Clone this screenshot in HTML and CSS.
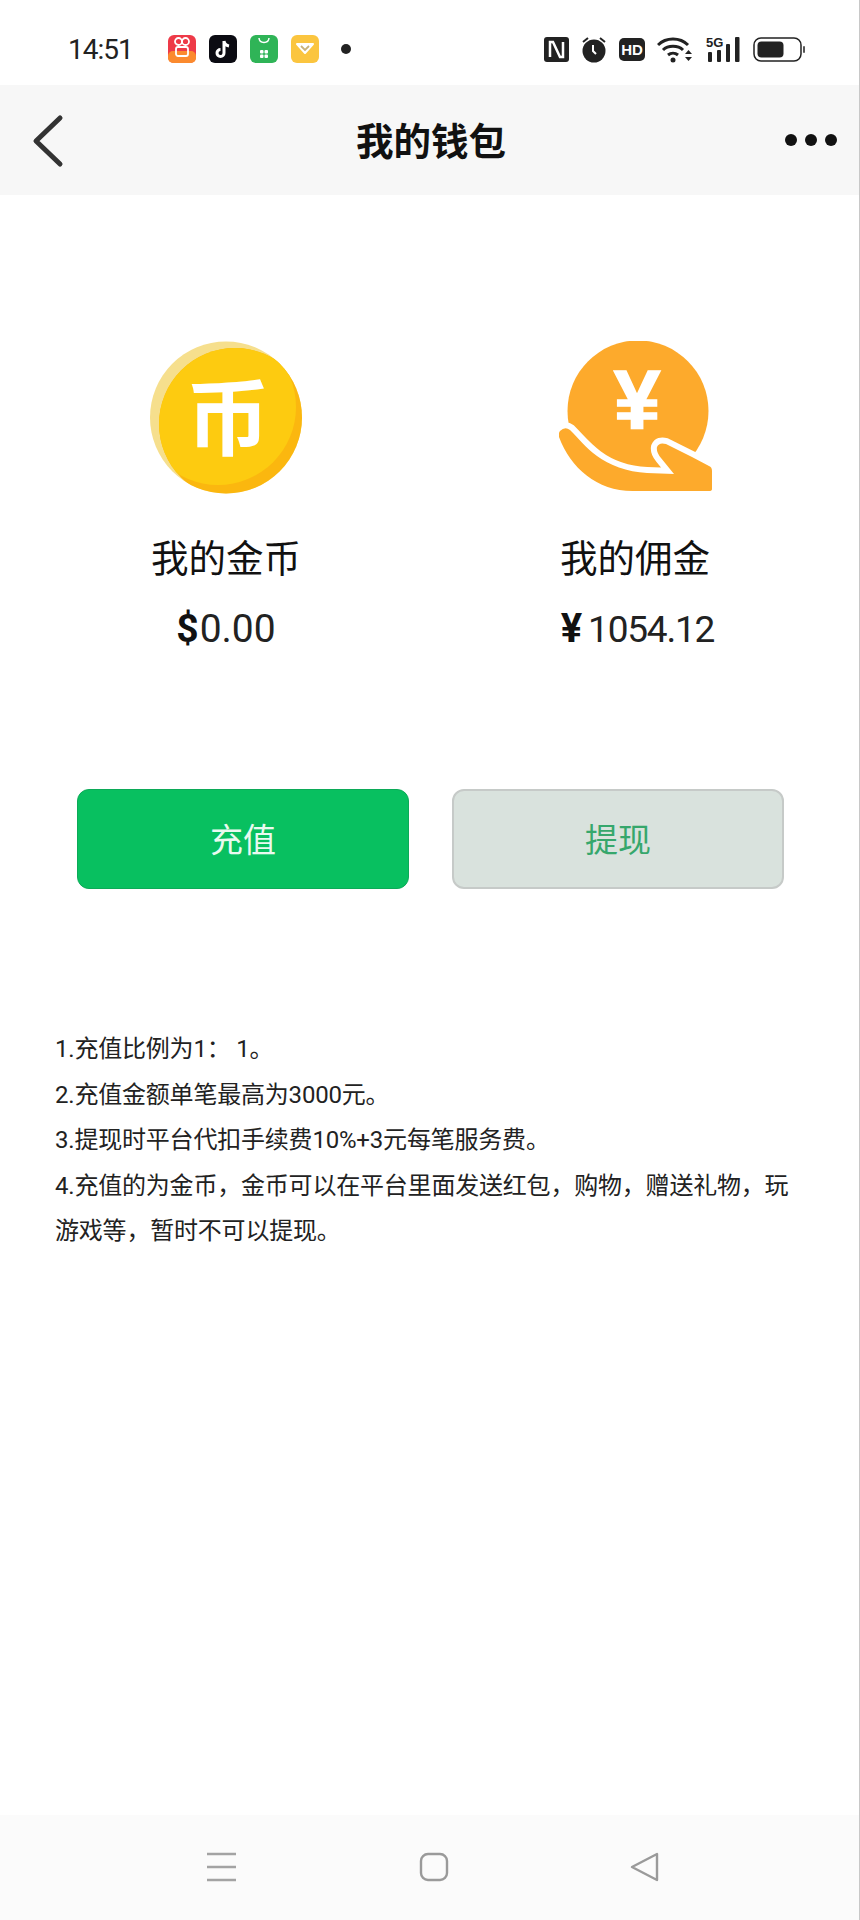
FILE: index.html
```html
<!DOCTYPE html>
<html lang="zh-CN">
<head>
    <meta charset="UTF-8">
    <meta name="viewport" content="width=device-width, initial-scale=1.0">
    <title>我的钱包</title>
    <link rel="stylesheet" href="styles.css">
</head>
<body>

<div class="page">
    <!-- Status bar -->
    <div class="status-bar">
        <span class="time">14:51</span>
        <div class="app-icons">
            <svg class="app-icon" viewBox="0 0 28 28">
                <rect width="28" height="28" rx="6" fill="#ee3a48"/>
                <rect y="16" width="28" height="12" rx="5" fill="#fb8a2e"/>
                <circle cx="10.500" cy="6.500" r="3.500" fill="none" stroke="#fff" stroke-width="1.800"/>
                <circle cx="17.500" cy="6.500" r="3.500" fill="none" stroke="#fff" stroke-width="1.800"/>
                <rect x="8" y="12" width="12" height="9" rx="2" fill="none" stroke="#fff" stroke-width="1.800"/>
            </svg>
            <svg class="app-icon" viewBox="0 0 28 28">
                <rect width="28" height="28" rx="6" fill="#0b0b12"/>
                <path d="M15 6v12a3.500 3.500 0 1 1-3.500-3.500M15 6c.5 3 2.500 4.500 5 5" fill="none" stroke="#fff" stroke-width="3"/>
            </svg>
            <svg class="app-icon" viewBox="0 0 28 28">
                <rect width="28" height="28" rx="6" fill="#2fb457"/>
                <path d="M9 3c.5 6 9.500 6 10 0" fill="none" stroke="#fff" stroke-width="1.500"/>
                <rect x="10" y="15" width="3.500" height="3.500" rx="1" fill="#fff"/>
                <rect x="14.500" y="15" width="3.500" height="3.500" rx="1" fill="#fff"/>
                <rect x="10" y="19.500" width="3.500" height="3.500" rx="1" fill="#fff"/>
                <rect x="14.500" y="19.500" width="3.500" height="3.500" rx="1" fill="#fff"/>
            </svg>
            <svg class="app-icon" viewBox="0 0 28 28">
                <rect width="28" height="28" rx="6" fill="#fbc53f"/>
                <path d="M6 9h16l-8 9z" fill="#fff" stroke="#fff" stroke-width="2" stroke-linejoin="round"/>
                <path d="M10 11l4 4 4-4" fill="none" stroke="#c9b27a" stroke-width="1.800"/>
            </svg>
            <span class="notify-dot"></span>
        </div>
        <div class="sys-icons">
            <svg width="25" height="25" viewBox="0 0 25 25">
                <rect width="25" height="25" rx="3" fill="#222"/>
                <path d="M6 20V5h3l7 15h3V5" fill="none" stroke="#fff" stroke-width="2.500"/>
            </svg>
            <svg width="26" height="27" viewBox="0 0 26 27">
                <circle cx="13" cy="15" r="11.500" fill="#222"/>
                <path d="M2 6l5-4M24 6l-5-4" stroke="#222" stroke-width="2"/>
                <path d="M12 9v6l3 3" fill="none" stroke="#fff" stroke-width="2"/>
            </svg>
            <svg width="26" height="23" viewBox="0 0 26 23">
                <rect width="26" height="23" rx="5" fill="#222"/>
                <text x="13" y="17" class="hd-text" text-anchor="middle">HD</text>
            </svg>
            <svg width="36" height="27" viewBox="0 0 36 27">
                <path d="M1 9c8-8 22-8 30 0M6 14c5-5 15-5 20 0M11 19c3-2.500 7-2.500 10 0" fill="none" stroke="#222" stroke-width="3"/>
                <circle cx="16" cy="24" r="2.500" fill="#222"/>
                <path d="M28 18h7l-3.500-4zM28 21h7l-3.500 4z" fill="#222"/>
            </svg>
            <svg width="36" height="27" viewBox="2 0 36 27">
                <text x="3" y="11" class="g-text">5G</text>
                <rect x="5" y="16" width="4" height="10" rx="1" fill="#222"/>
                <rect x="14" y="14" width="4" height="12" rx="1" fill="#222"/>
                <rect x="23" y="8" width="4" height="18" rx="1" fill="#222"/>
                <rect x="32" y="1" width="4.500" height="25" rx="1" fill="#222"/>
            </svg>
            <svg width="52" height="25" viewBox="0 0 52 25">
                <rect x="1" y="1" width="47" height="23" rx="7" fill="none" stroke="#222" stroke-width="1.500"/>
                <rect x="4.500" y="4.500" width="26" height="16" rx="4" fill="#222"/>
                <rect x="50" y="9" width="2" height="7" rx="1" fill="#555"/>
            </svg>
        </div>
    </div>

    <!-- Title bar -->
    <div class="title-bar">
        <svg class="back-icon" width="36" height="56" viewBox="0 0 36 56">
            <path d="M29 6L5 29l24 23" fill="none" stroke="#333" stroke-width="5" stroke-linecap="round" stroke-linejoin="round"/>
        </svg>
        <h1>我的钱包</h1>
        <div class="more-dots"><span></span><span></span><span></span></div>
    </div>

    <!-- Balances -->
    <div class="stats">
        <div class="stat">
            <svg width="152" height="153" viewBox="0 0 152 153">
                <defs>
                    <clipPath id="coinOuter"><circle cx="76" cy="76.500" r="76"/></clipPath>
                    <clipPath id="coinFace"><circle cx="85" cy="83" r="76"/></clipPath>
                </defs>
                <g clip-path="url(#coinOuter)">
                    <rect width="152" height="153" fill="#f6df8d"/>
                    <circle cx="85" cy="83" r="76" fill="#fbb70f"/>
                    <g clip-path="url(#coinFace)">
                        <circle cx="68" cy="66" r="78" fill="#fdcb10"/>
                    </g>
                </g>
                <text x="78" y="108" class="coin-glyph" text-anchor="middle">币</text>
            </svg>
            <div class="stat-label">我的金币</div>
            <div class="stat-value"><b>$</b>0.00</div>
        </div>
        <div class="stat">
            <svg width="153" height="153" viewBox="0 0 153 153">
                <circle cx="79" cy="70" r="70.500" fill="#fdaa2c"/>
                <path id="hand" d="M1 90q5-5 10-1c9 9 15 17 27 26 12 9 30 16 50 17l27 1-13-16q-5-6-4-11 2-5 9-3l26 13 17 9q3 1 3 5v18q0 2-3 2H78C40 152 12 128 0 96q-1-3 1-6z" fill="#fdaa2c" stroke="#fff" stroke-width="12" paint-order="stroke"/>
                <text x="78" y="88" class="yen-glyph" text-anchor="middle">¥</text>
            </svg>
            <div class="stat-label">我的佣金</div>
            <div class="stat-value stat-value-tight"><b class="yen">¥</b>1054.12</div>
        </div>
    </div>

    <!-- Buttons -->
    <div class="button-group">
        <button type="button" class="primary">充值</button>
        <button type="button" class="secondary">提现</button>
    </div>

    <!-- Rules -->
    <div class="notes">
        <p>1.充值比例为1<span class="colon">：</span> 1。</p>
        <p>2.充值金额单笔最高为3000元。</p>
        <p>3.提现时平台代扣手续费10%+3元每笔服务费。</p>
        <p>4.充值的为金币，金币可以在平台里面发送红包，购物，赠送礼物，玩游戏等，暂时不可以提现。</p>
    </div>

    <!-- Navigation bar -->
    <div class="nav-bar">
        <svg width="30" height="30" viewBox="0 0 30 30">
            <path d="M0 2h29M0 15h29M0 28h29" stroke="#a3a3a3" stroke-width="2.600"/>
        </svg>
        <svg width="30" height="30" viewBox="0 0 30 30">
            <rect x="2" y="2" width="26" height="26" rx="7" fill="none" stroke="#9a9a9a" stroke-width="2.400"/>
        </svg>
        <svg width="30" height="30" viewBox="0 0 30 30">
            <path d="M2 15L27 2v26z" fill="none" stroke="#9a9a9a" stroke-width="2.400" stroke-linejoin="round"/>
        </svg>
    </div>
</div>

</body>
</html>
```

FILE: styles.css
```css
body {
    font-family: Roboto, "Noto Sans CJK SC", sans-serif;
    margin: 0;
    background-color: #fff;
    color: #111;
}
.page {
    height: 1920px;
    box-sizing: border-box;
    border-right: 1px solid #c8c8c8;
    display: flex;
    flex-direction: column;
    overflow: hidden;
}
.status-bar {
    height: 85px;
    flex: none;
    display: flex;
    align-items: center;
    padding: 13px 54px 0 68px;
    box-sizing: border-box;
}
.time {
    font-size: 28px;
    letter-spacing: -1px;
    color: #222;
    width: 100px;
}
.app-icons {
    display: flex;
    align-items: center;
    gap: 13px;
}
.app-icon {
    width: 28px;
    height: 28px;
}
.notify-dot {
    width: 10px;
    height: 10px;
    border-radius: 50%;
    background: #222;
    margin-left: 9px;
}
.sys-icons {
    display: flex;
    align-items: center;
    gap: 12px;
    margin-left: auto;
}
.hd-text {
    font: bold 15px "Liberation Sans", sans-serif;
    fill: #fff;
}
.g-text {
    font: bold 13px "Liberation Sans", sans-serif;
    fill: #222;
}
.title-bar {
    height: 110px;
    flex: none;
    background: #f7f7f7;
    display: flex;
    align-items: center;
    justify-content: space-between;
    padding: 0 22px 0 31px;
    box-sizing: border-box;
}
h1 {
    margin: 0 0 4px 10px;
    font-size: 37.500px;
    font-weight: bold;
    color: #111;
}
.more-dots {
    display: flex;
    gap: 8px;
}
.more-dots span {
    width: 12px;
    height: 12px;
    border-radius: 50%;
    background: #111;
}
.stats {
    display: flex;
    justify-content: space-between;
    padding: 146px 74px 0 76px;
}
.stat {
    width: 300px;
    display: flex;
    flex-direction: column;
    align-items: center;
}
.coin-glyph {
    font: bold 84px "Noto Sans CJK SC", sans-serif;
    fill: #fff;
}
.yen-glyph {
    font: bold 84px "Liberation Sans", sans-serif;
    fill: #fff;
    stroke: #fff;
    stroke-width: 1.500px;
}
.stat-label {
    font-size: 37.500px;
    line-height: 50px;
    margin-top: 40px;
    color: #111;
}
.stat-value {
    font-size: 39px;
    line-height: 50px;
    margin-top: 20px;
    color: #222;
}
.stat-value b {
    color: #111;
    margin-right: 1px;
}
.stat-value-tight {
    font-size: 37px;
    letter-spacing: -1.200px;
    margin-left: 5px;
}
.stat-value .yen {
    margin-right: 7px;
    font-size: 40px;
}
.button-group {
    display: flex;
    gap: 43px;
    padding: 134px 0 0 77px;
}
button {
    width: 332px;
    height: 100px;
    padding-bottom: 4px;
    border-radius: 12px;
    font-family: inherit;
    font-size: 33px;
    box-sizing: border-box;
}
.primary {
    background-color: #08c060;
    border: 1px solid #0caa58;
    color: #eafaf0;
}
.secondary {
    background-color: #d9e2dd;
    border: 2px solid #c6cac8;
    color: #36a76c;
}
.notes {
    padding: 135px 55px 0;
    font-size: 24px;
    letter-spacing: -0.200px;
    line-height: 45.500px;
    color: #222;
}
.notes p {
    margin: 0;
}
.colon {
    font-family: "Noto Sans CJK TC", sans-serif;
}
.nav-bar {
    height: 105px;
    flex: none;
    margin-top: auto;
    background: #fbfbfb;
    display: flex;
    justify-content: space-between;
    padding: 37px 199px 0 207px;
    box-sizing: border-box;
}
```
